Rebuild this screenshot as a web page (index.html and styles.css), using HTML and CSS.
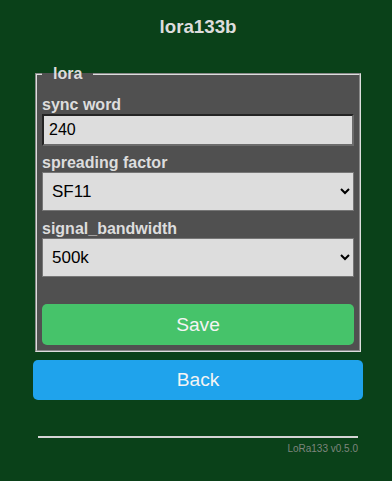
FILE: index.html
```html
<!DOCTYPE html>
<html lang="en">
<head>
<meta charset="utf-8">
<title>lora133b</title>
<link rel="stylesheet" href="styles.css">
</head>
<body>
<main class="wrap">
  <h3 class="title">lora133b</h3>
  <form class="form">
    <fieldset class="group">
      <legend class="group-title">lora</legend>
      <label class="field-label" for="sync">sync word</label>
      <input class="text-input" id="sync" type="text" value="240">
      <label class="field-label" for="sf">spreading factor</label>
      <select class="select" id="sf">
        <option>SF7</option>
        <option>SF8</option>
        <option>SF9</option>
        <option>SF10</option>
        <option selected>SF11</option>
        <option>SF12</option>
      </select>
      <label class="field-label" for="bw">signal_bandwidth</label>
      <select class="select" id="bw">
        <option>125k</option>
        <option>250k</option>
        <option selected>500k</option>
      </select>
      <button class="btn btn-save" type="button">Save</button>
    </fieldset>
  </form>
  <button class="btn btn-back" type="button">Back</button>
  <footer class="footer">
    <div class="rule"></div>
    <div class="version">LoRa133 v0.5.0</div>
  </footer>
</main>
</body>
</html>
```

FILE: styles.css
```css
html, body {
  margin: 0;
  padding: 0;
  background: #0a4119;
}

body {
  font-family: "Liberation Sans", Arial, sans-serif;
  color: #dddddd;
}

.wrap {
  width: 330px;
  margin-left: 33px;
}

.title {
  margin: 0;
  padding-top: 16px;
  font-size: 18.72px;
  line-height: 21px;
  font-weight: bold;
  text-align: center;
  color: #dddddd;
}

.form {
  margin: 0;
}

.group {
  margin: 28px 2px 0;
  padding: 12px 5px 5px;
  min-width: 0;
  background: #505050;
  border: 2px groove #dddddd;
}

.group-title {
  padding: 0 11px;
  font-size: 16px;
  line-height: 18.4px;
  font-weight: bold;
  color: #dddddd;
}

.field-label {
  display: block;
  font-size: 16px;
  line-height: 19px;
  font-weight: bold;
  color: #dddddd;
}

.text-input {
  display: block;
  box-sizing: border-box;
  width: 100%;
  height: 32px;
  margin: 0 0 7px;
  padding: 0 5px;
  font-family: "Liberation Sans", Arial, sans-serif;
  font-size: 16px;
  color: #000;
  background: #dddddd;
  border-style: solid;
  border-width: 2px;
  border-color: #242424 #6c6c6c #6c6c6c #242424;
  border-radius: 0;
  outline: none;
}

.select {
  display: block;
  box-sizing: border-box;
  width: 100%;
  height: 39px;
  margin: 0 0 8px;
  padding: 0 5px;
  font-family: "Liberation Sans", Arial, sans-serif;
  font-size: 17px;
  color: #000;
  background-color: #dddddd;
  border: 1px solid #767676;
  border-radius: 0;
}

.btn {
  display: block;
  box-sizing: border-box;
  width: 100%;
  border: 0;
  border-radius: 5px;
  font-family: "Liberation Sans", Arial, sans-serif;
  font-size: 19.2px;
  color: #f4f4f4;
  cursor: pointer;
  padding: 0;
}

.btn-save {
  height: 41px;
  margin-top: 27px;
  background: #46c36a;
}

.btn-back {
  height: 40px;
  margin-top: 8px;
  background: #1fa3ec;
}

.footer {
  padding: 36px 5px 0;
}

.rule {
  height: 2px;
  background: #d4d4d4;
}

.version {
  margin-top: 5px;
  font-size: 10px;
  line-height: 12px;
  text-align: right;
  color: #7d857d;
}
```
